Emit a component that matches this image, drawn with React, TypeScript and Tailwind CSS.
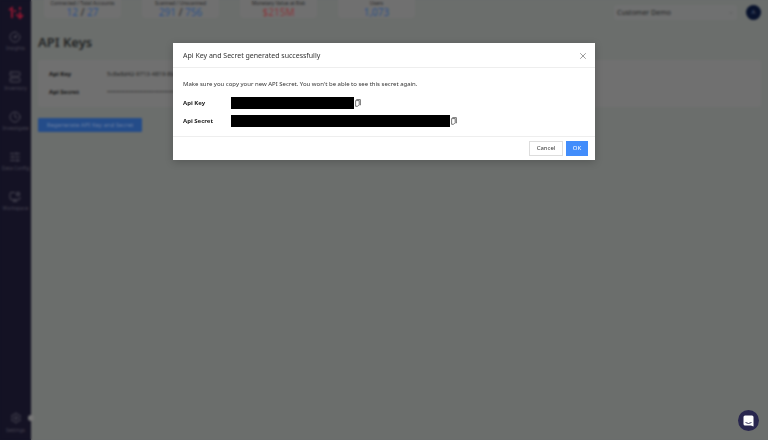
import React, { useState } from "react";
import clsx from "clsx";
import { ChevronDown, CircleGauge, Clock, MonitorCog, Settings, SlidersHorizontal, Server, X } from "lucide-react";

const Menus = [
  { label: "Insights", icon: CircleGauge },
  { label: "Inventory", icon: Server },
  { label: "Investigate", icon: Clock },
  { label: "Data Config", icon: SlidersHorizontal },
  { label: "Workspace", icon: MonitorCog },
];

const Stats = [
  { label: "Connected / Total Accounts", values: ["12", "27"], color: "text-[#2c5088]" },
  { label: "Scanned / Unscanned", values: ["291", "756"], color: "text-[#2c5088]" },
  { label: "Monetary Value at Risk", values: ["$215M"], color: "text-[#88383c]" },
  { label: "Users", values: ["1,073"], color: "text-[#2c5088]" },
];

const Keys = [
  { label: "Api Key", bar: "w-[123px]" },
  { label: "Api Secret", bar: "w-[219px]" },
];

const Logo = () => (
  <svg width="16" height="14" viewBox="0 0 16 14" fill="none" stroke="#8c1630" strokeWidth="2">
    <path d="M1 4L4 2V12M7 4V6M9 8V10M12 1V4M12 6V12M15 9L12 12L10 10" />
  </svg>
);

const CopyIcon = () => (
  <svg width="6" height="8" viewBox="0 0 6 8" fill="none" stroke="#555" strokeWidth="0.8">
    <path d="M1.6 1V0.6H5.4V6H4.6" />
    <path d="M0.6 1.6H4.2V5.6L2.6 7.3H0.6Z" />
  </svg>
);

const Sidebar = () => (
  <nav className="flex w-[31px] shrink-0 flex-col items-center bg-[#141224] pt-[6px] text-[#484653]">
    <Logo />
    <div className="mt-[11px] flex flex-col">
      {Menus.map(({ label, icon: Icon }) => (
        <a href="#" key={label} className="flex h-[40px] flex-col items-center gap-px">
          <Icon size={12} strokeWidth={2} />
          <span className="text-[5px] leading-[8px] whitespace-nowrap">{label}</span>
        </a>
      ))}
    </div>
    <a href="#" className="mt-auto flex flex-col items-center gap-[2px] pb-[6px]">
      <Settings size={12} strokeWidth={2} />
      <span className="text-[5px] leading-[8px]">Settings</span>
    </a>
    <button
      aria-label="Collapse menu"
      className="absolute bottom-[19px] left-[28px] h-[6px] w-[6px] rounded-full bg-[#777]"
    />
  </nav>
);

const Header = () => (
  <header className="flex h-[25px] items-start pl-[13px] pr-[7px]">
    <div className="flex gap-[21px]">
      {Stats.map(({ label, values, color }) => (
        <div
          key={label}
          className="flex h-[18px] w-[77px] flex-col items-center rounded-b-[3px] bg-[#707070]"
        >
          <div className="text-[5px] leading-[6px] whitespace-nowrap text-[#222]">{label}</div>
          <div className={clsx("text-[10px] leading-[12px] whitespace-pre", color)}>
            {values.map((value, i) => (
              <React.Fragment key={value}>
                {i > 0 && <span className="text-[#222]"> / </span>}
                {value}
              </React.Fragment>
            ))}
          </div>
        </div>
      ))}
    </div>
    <div className="mt-[5px] ml-auto flex items-center gap-[9px]">
      <div className="flex h-[15px] items-center rounded-[2px] bg-[#6f7070] pr-[3px]">
        <select
          aria-label="Customer"
          className="w-[120px] appearance-none pl-[3px] text-[7px] leading-[13px] text-[#222]"
        >
          <option>Customer Demo</option>
        </select>
        <ChevronDown size={6} className="-ml-[6px] text-[#555]" />
      </div>
      <button className="flex h-[15px] w-[15px] items-center justify-center rounded-full bg-[#08122c] text-[6px] text-[#59627a]">
        A
      </button>
    </div>
  </header>
);

const Page = () => (
  <div className="relative flex min-h-screen">
    <Sidebar />
    <div className="min-w-0 flex-1">
      <Header />
      <main className="px-[7px]">
        <h1 className="pt-[7px] text-[13px] leading-[20px] font-semibold text-[#222424]">API Keys</h1>
        <div className="mt-[8px] flex h-[47px] flex-col gap-[5px] rounded-[2px] bg-[#707070] px-[11px] pt-[8px] text-[6px] leading-[13px] text-[#222]">
          <div className="flex">
            <span className="w-[58px] font-bold text-[#111]">Api Key</span>
            <span>5c8e8d42-9713-4819-8b27</span>
          </div>
          <div className="flex">
            <span className="w-[58px] font-bold text-[#111]">Api Secret</span>
            <span>••••••••••••••••••••••••••••••••</span>
          </div>
        </div>
        <button className="mt-[11px] h-[14px] w-[104px] rounded-[1px] bg-[#244c89] text-[6px] leading-[14px] whitespace-nowrap text-[#6d80a3]">
          Regenerate API Key and Secret
        </button>
      </main>
    </div>
  </div>
);

const KeyModal = ({ onClose }: { onClose: () => void }) => (
  <div className="fixed inset-0 flex items-start justify-center px-4 pt-[43px] backdrop-blur-[1px]">
    <div
      role="dialog"
      aria-modal="true"
      aria-labelledby="modal-title"
      className="w-full max-w-[422px] bg-white text-[#333] shadow-[0_2px_8px_rgba(0,0,0,0.2)]"
    >
      <div className="flex h-[25px] items-center justify-between border-b border-[#eee] pt-[2px] pl-[10px] pr-[7px]">
        <h2 id="modal-title" className="text-[7px] leading-[12px]">
          Api Key and Secret generated successfully
        </h2>
        <button aria-label="Close" onClick={onClose} className="text-[#888]">
          <X size={10} strokeWidth={2} />
        </button>
      </div>
      <div className="px-[10px] pt-[10px] pb-[9px] text-[6px] leading-[12px]">
        <p>Make sure you copy your new API Secret. You won't be able to see this secret again.</p>
        <dl className="mt-[7px] flex flex-col gap-[6px]">
          {Keys.map(({ label, bar }) => (
            <div key={label} className="flex h-[12px] items-center">
              <dt className="w-[48px] font-bold text-[#222]">{label}</dt>
              <dd className="flex items-center gap-px">
                <span className={clsx("h-[12px] bg-black", bar)} />
                <button aria-label={`Copy ${label}`}>
                  <CopyIcon />
                </button>
              </dd>
            </div>
          ))}
        </dl>
      </div>
      <div className="flex justify-end gap-[3px] border-t border-[#eee] px-[7px] py-[4px] text-[6px]">
        <button onClick={onClose} className="h-[15px] w-[34px] border border-[#ddd] leading-[13px]">
          Cancel
        </button>
        <button onClick={onClose} className="h-[15px] w-[22px] bg-[#428dfb] leading-[15px] text-white">
          OK
        </button>
      </div>
    </div>
  </div>
);

const App = () => {
  const [open, setOpen] = useState(true);
  return (
    <div className="min-h-screen overflow-hidden bg-[#6b6e6c] font-['Noto_Sans',sans-serif]">
      <Page />
      {open && <KeyModal onClose={() => setOpen(false)} />}
      <button
        aria-label="Open chat"
        className="fixed right-[9px] bottom-[9px] flex h-[21px] w-[21px] items-center justify-center rounded-full bg-[#28264e]"
      >
        <svg width="11" height="12" viewBox="0 0 11 12" fill="none">
          <path d="M2 0.5H9Q10.5 0.5 10.5 2V11.5L8 10.5H2Q0.5 10.5 0.5 9V2Q0.5 0.5 2 0.5Z" fill="#fff" />
          <path d="M2.5 7.5Q5.5 9.5 8.5 7.5" stroke="#28264e" strokeWidth="0.9" />
        </svg>
      </button>
    </div>
  );
};

export default App;
